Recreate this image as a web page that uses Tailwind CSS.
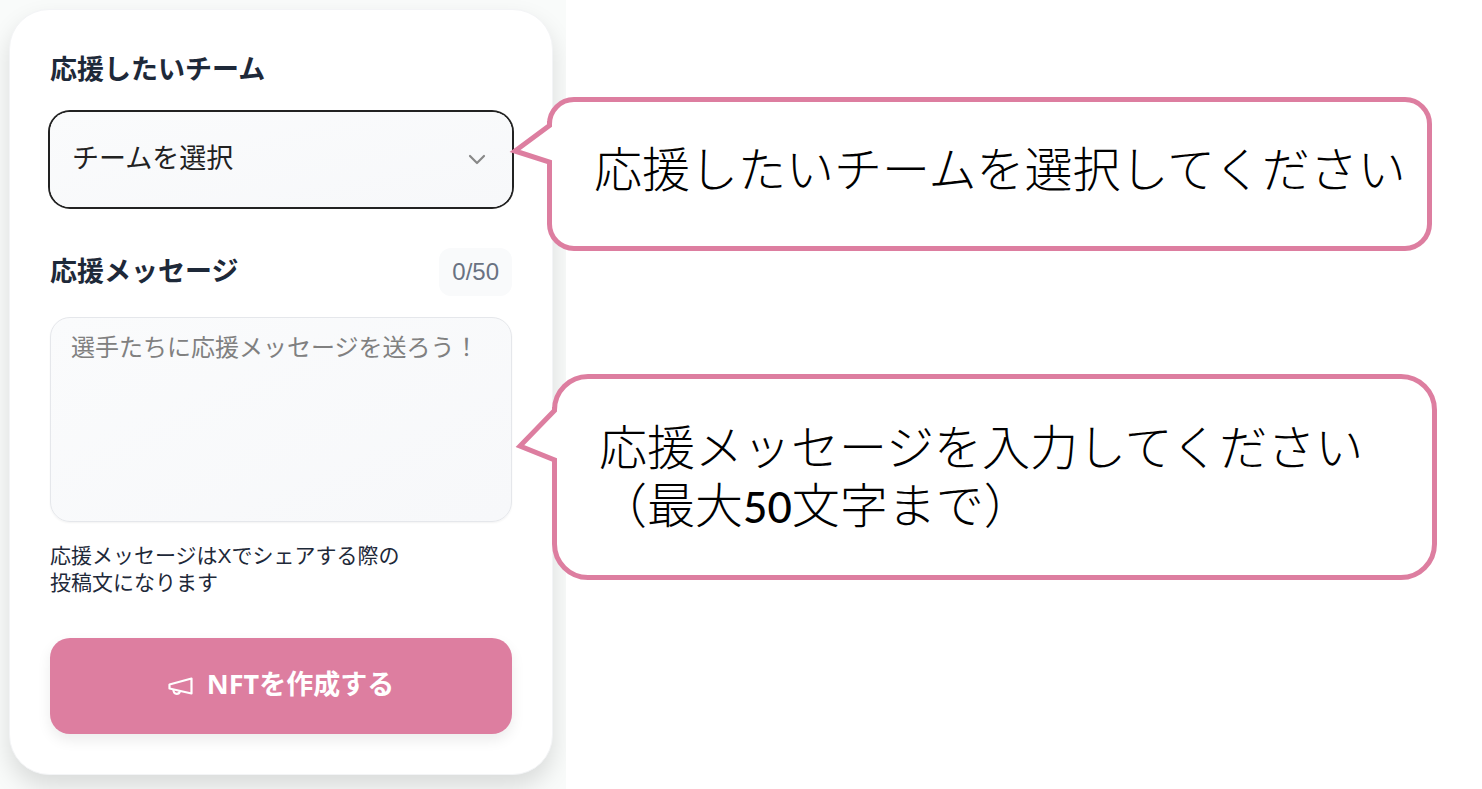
<!DOCTYPE html>
<html lang="ja">
<head>
<meta charset="utf-8">
<meta name="viewport" content="width=device-width, initial-scale=1">
<title>NFT作成</title>
<script src="https://cdn.jsdelivr.net/npm/@tailwindcss/browser@4"></script>
</head>
<body class="bg-white font-['Liberation_Sans','Noto_Sans_CJK_JP',sans-serif]">
<main class="flex min-h-screen">
  <section class="w-[566px] shrink-0 overflow-hidden bg-[#f9fbfa] pt-[9px] pr-[13px] pb-[14px] pl-[9px]">
    <form class="flex flex-col rounded-[40px] border border-gray-100 bg-white px-10 pt-10 pb-10 shadow-[0_12px_24px_rgba(0,0,0,0.13)]">
      <label for="team" class="text-[27px] leading-10 font-bold text-gray-800">応援したいチーム</label>
      <div class="relative mt-[22px]">
        <select id="team" class="h-[95px] w-full appearance-none rounded-[20px] bg-linear-to-br from-[#fafbfc] to-[#f7f8fa] pr-16 pl-[22px] text-[27px] text-[#222] ring-2 ring-[#222] outline-none">
          <option>チームを選択</option>
        </select>
        <svg class="pointer-events-none absolute top-[39px] right-[26px] h-4 w-[18px]" viewBox="0 0 18 16" fill="none" stroke="#888" stroke-width="2.2" stroke-linecap="round" stroke-linejoin="round"><path d="M2 5l7 7 7-7"/></svg>
      </div>
      <div class="mt-[41px] flex items-center justify-between">
        <label for="message" class="text-[27px] leading-10 font-bold text-gray-800">応援メッセージ</label>
        <span class="rounded-xl bg-gray-50 px-[13px] text-2xl leading-[48px] text-gray-500">0/50</span>
      </div>
      <textarea id="message" maxlength="50" placeholder="選手たちに応援メッセージを送ろう！" class="mt-[21px] h-[205px] resize-none rounded-[20px] border border-gray-200 bg-linear-to-br from-[#fafbfc] to-[#f7f8fa] px-5 py-[14px] text-2xl shadow-xs outline-none placeholder:text-[#808080]"></textarea>
      <p class="mt-5 text-[21px] leading-[27px] text-gray-800">応援メッセージはXでシェアする際の<br>投稿文になります</p>
      <button type="button" class="mt-[42px] flex h-24 items-center justify-center gap-[14px] rounded-[20px] bg-[#dd7ea0] text-[27px] font-bold text-white shadow-[0_6px_14px_rgba(0,0,0,0.08)]">
        <svg class="h-[20px] w-[25px]" viewBox="0 0 25 20" fill="none" stroke="currentColor" stroke-width="2.2" stroke-linejoin="round"><path d="M1.500 8.500L23.500 2.500v15L1.500 12.500z"/><path d="M5.500 13.500c-.3 2.500 1 4.300 3.300 4.300 1.700 0 2.700-.9 3.200-2.700"/></svg>
        <span class="pb-1 font-['Noto_Sans','Noto_Sans_CJK_JP',sans-serif]">NFTを作成する</span>
      </button>
    </form>
  </section>

  <aside class="z-10 -ml-[19px] flex min-w-0 flex-1 flex-col gap-[123px] pt-[97px] pr-[45px] font-['Noto_Sans_CJK_JP',sans-serif] text-5xl font-light text-black">
    <div class="relative mr-[5px] flex h-[154px] items-center rounded-[27px] border-5 border-[#dd7ea0] bg-white pb-4 pl-[42px]">
      <svg class="absolute top-0 -left-[45px] h-[80px] w-[50px]" viewBox="0 0 50 80"><path fill="#fff" d="M46 23H42.500L8 49l34.500 11H46z"/><path fill="none" stroke="#dd7ea0" stroke-width="5" stroke-miterlimit="8" d="M42.500 19v4.500L8 49l34.500 11v4"/></svg>
      <p class="leading-[58px] whitespace-nowrap">応援したいチームを選択してください</p>
    </div>
    <div class="relative ml-[5px] flex h-[206px] items-center rounded-[36px] border-5 border-[#dd7ea0] bg-white pb-1 pl-[42px]">
      <svg class="absolute top-0 -left-[45px] h-[90px] w-[50px]" viewBox="0 0 50 90"><path fill="#fff" d="M46 31H42.500L8 67l34.500 14H46z"/><path fill="none" stroke="#dd7ea0" stroke-width="5" stroke-miterlimit="8" d="M42.500 28v3.500L8 67l34.500 14v4"/></svg>
      <div class="leading-[58px] whitespace-nowrap">
        <p>応援メッセージを入力してください</p>
        <p>（最大<span class="font-['Lato'] text-[42px] font-medium">50</span>文字まで）</p>
      </div>
    </div>
  </aside>
</main>
</body>
</html>
